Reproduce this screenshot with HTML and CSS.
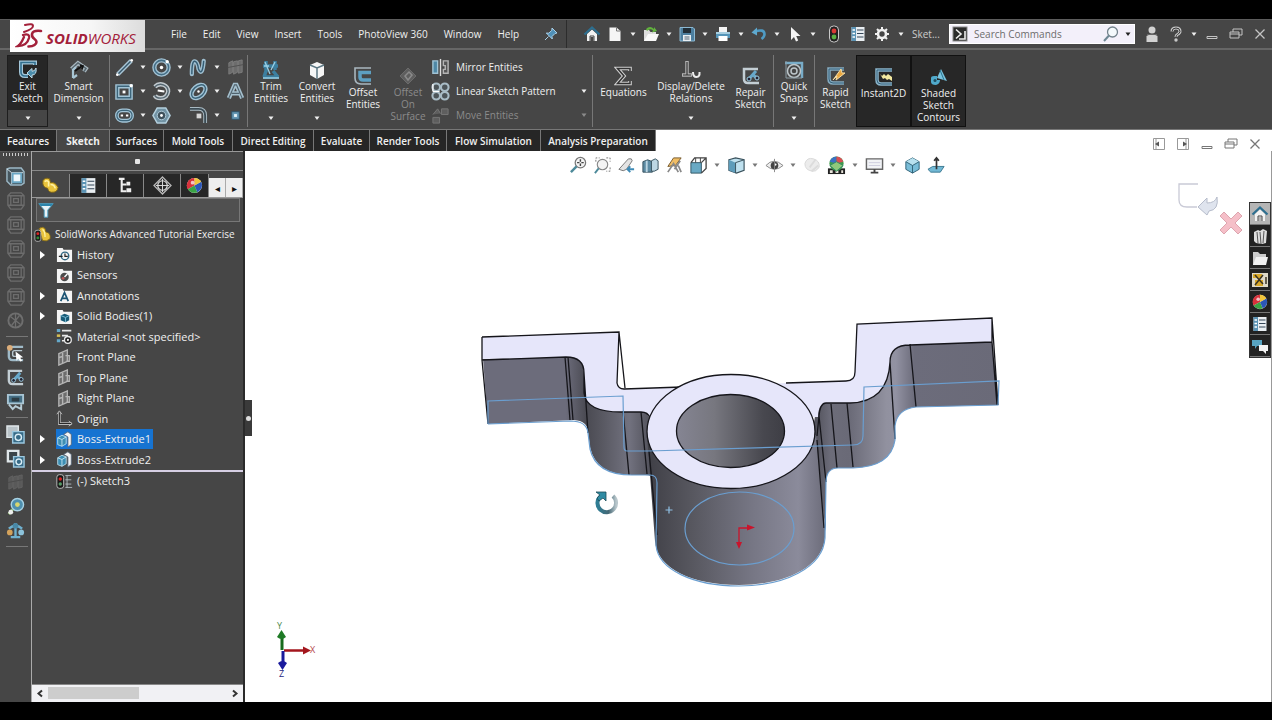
FILE: index.html
```html
<!DOCTYPE html>
<html lang="en">
<head>
<meta charset="utf-8">
<title>SolidWorks</title>
<link rel="stylesheet" href="styles.css">
</head>
<body>
<svg class="defs" aria-hidden="true">
  <defs>
    <linearGradient id="gBore" x1="0" x2="1"><stop offset="0" stop-color="#858593"/><stop offset=".35" stop-color="#77777f"/><stop offset=".8" stop-color="#48484f"/><stop offset="1" stop-color="#3e3e45"/></linearGradient>
    <linearGradient id="gCyl" x1="0" x2="1"><stop offset="0" stop-color="#3f3f46"/><stop offset=".25" stop-color="#57575f"/><stop offset=".6" stop-color="#777785"/><stop offset=".85" stop-color="#8b8b9b"/><stop offset="1" stop-color="#6c6c7a"/></linearGradient>
    <linearGradient id="gLeft" x1="0" x2="1"><stop offset="0" stop-color="#6c6c7b"/><stop offset=".48" stop-color="#6c6c7b"/><stop offset=".6" stop-color="#4a4a52"/><stop offset=".68" stop-color="#56565f"/><stop offset=".85" stop-color="#72727f"/><stop offset="1" stop-color="#4b4b54"/></linearGradient>
    <linearGradient id="gRight" x1="0" x2="1"><stop offset="0" stop-color="#4c4c55"/><stop offset=".1" stop-color="#6c6c79"/><stop offset=".2" stop-color="#6a6a77"/><stop offset=".4" stop-color="#91919f"/><stop offset=".45" stop-color="#9292a2"/><stop offset=".55" stop-color="#6c6c7b"/><stop offset="1" stop-color="#6a6a78"/></linearGradient>
    <linearGradient id="gSpin" x1="0" x2="1"><stop offset="0" stop-color="#2f7d94"/><stop offset=".6" stop-color="#456875"/><stop offset="1" stop-color="#b8c6cb"/></linearGradient>
  </defs>
  <symbol id="caret" viewBox="0 0 8 8"><path d="M1.500 2.500h5L4 6z" fill="currentColor"/></symbol>
  <symbol id="pin" viewBox="0 0 16 16"><path d="M9 2l5 5-2 .5-3 3 .3 2.500-6-6 2.600.2 3-3zM5.500 10.500L2 14" fill="#4f90b8" stroke="#a9d0e8"/></symbol>
  <symbol id="home" viewBox="0 0 18 18"><path d="M4 9v7h3.500v-4h3v4H14V9L9 4.500z" fill="#f2f2f2"/><path d="M1.500 9.500L9 2.500l7.500 7" fill="none" stroke="#2d6f90" stroke-width="2.200"/><path d="M7 16v-5h4v5" fill="none" stroke="#444"/></symbol>
  <symbol id="new" viewBox="0 0 18 18"><path d="M3.500 2.500h7L14.500 6v10h-11z" fill="#f5f5f5"/><path d="M10.500 2.500V6h4" fill="none" stroke="#777"/></symbol>
  <symbol id="open" viewBox="0 0 18 18"><path d="M2 5h5l1.500 2H14v9H2z" fill="#ddd"/><path d="M2 16l4-7h11l-3 7z" fill="#f8f8f8"/><path d="M4 4q4-4 8 0V2l3 4-5 1.500 1-2Q8 3 5 6z" fill="#62b33e"/></symbol>
  <symbol id="save" viewBox="0 0 18 18"><path d="M2 2.500h13l1.500 1.500v12H2z" fill="#4d7f9f" stroke="#8bb8d2"/><path d="M5 3h8v5H5z" fill="#222f38"/><path d="M5 10h8v6H5z" fill="#e8eef2"/><path d="M6.500 12h5M6.500 14h5" stroke="#567"/></symbol>
  <symbol id="print" viewBox="0 0 18 18"><path d="M5 2h8v5H5z" fill="#f5f5f5"/><path d="M2 7h14v6H2z" fill="#5695b8"/><path d="M2 7h14v2H2z" fill="#a7cee0"/><path d="M4.500 11h9v5h-9z" fill="#fff"/></symbol>
  <symbol id="undo" viewBox="0 0 18 18"><path d="M5 6.500q9-3 9.500 2.500 0 3-3 5" fill="none" stroke="#4f9bc4" stroke-width="2.600"/><path d="M1.500 7.500L7 2.500v8z" fill="#5fa9cf"/></symbol>
  <symbol id="cursor" viewBox="0 0 18 18"><path d="M5 2v13l3-3 2 4.500 2.200-1L10.200 11h4.300z" fill="#f4f4f4"/></symbol>
  <symbol id="traffic" viewBox="0 0 18 18"><rect x="4.500" y="1" width="9" height="16" rx="4" fill="#222" stroke="#c9c9c9"/><circle cx="9" cy="6" r="2.400" fill="#d93a35"/><circle cx="9" cy="12" r="2.400" fill="#5bb043"/></symbol>
  <symbol id="list" viewBox="0 0 18 18"><path d="M2.500 2h13v14h-13z" fill="#e9eef2"/><path d="M2.500 2H7v14H2.500z" fill="#5b93b4"/><path d="M8 5h6.500M8 8.500h6.500M8 12h6.500" stroke="#345"/><path d="M3.500 5H6M3.500 8.500H6M3.500 12H6" stroke="#fff" stroke-width="1.500"/></symbol>
  <symbol id="gear" viewBox="0 0 18 18"><circle cx="9" cy="9" r="4" fill="none" stroke="#f1f1f1" stroke-width="2.600"/><path d="M9 2v2.500M9 13.500V16M2 9h2.500M13.500 9H16M4 4l2 2M12 12l2 2M4 14l2-2M12 6l2-2" stroke="#f1f1f1" stroke-width="2"/></symbol>
  <symbol id="cmd" viewBox="0 0 16 16"><rect x="1" y="1" width="14" height="14" fill="#2b2b2b" stroke="#8a8a8a"/><path d="M4 3.500L9 8l-5 4.500M7 13h6V5" fill="none" stroke="#eee" stroke-width="1.600"/></symbol>
  <symbol id="search" viewBox="0 0 18 18"><circle cx="10.500" cy="7" r="5" fill="#f4f9fc" stroke="#73828c" stroke-width="1.300"/><path d="M7 10.500L2 16" stroke="#6f8794" stroke-width="2"/></symbol>
  <symbol id="user" viewBox="0 0 18 18"><circle cx="9" cy="5" r="3.500" fill="#d2d2d2"/><path d="M3.500 17v-6q5.500-3.500 11 0v6z" fill="#d2d2d2"/><path d="M4 9.500h10" stroke="#666"/></symbol>
  <symbol id="help" viewBox="0 0 18 18"><path d="M5 6.500Q5 3 9 3t4 3.300q0 2-2.600 3.200Q9 10.200 9 12" fill="none" stroke="#c8c8c8" stroke-width="3"/><path d="M5 6.500Q5 3 9 3t4 3.300q0 2-2.600 3.200Q9 10.200 9 12" fill="none" stroke="#333"/><circle cx="9" cy="15" r="1.700" fill="#c8c8c8"/></symbol>
  <symbol id="min" viewBox="0 0 14 14"><path d="M2 9.500h10v2H2z" fill="none" stroke="currentColor"/></symbol>
  <symbol id="restore" viewBox="0 0 14 14"><path d="M4 5V2h9v6h-3M1 5h9v6H1zM1 7h9" fill="none" stroke="currentColor"/></symbol>
  <symbol id="close" viewBox="0 0 14 14"><path d="M2.500 2.500l9 9M11.500 2.500l-9 9" stroke="currentColor" stroke-width="1.300"/></symbol>
  <symbol id="dockl" viewBox="0 0 14 14"><path d="M1.500 1.500h11v11h-11zM4 1.500v11" fill="none" stroke="#999"/><path d="M3 7l4-2.500v5z" fill="#555"/></symbol>
  <symbol id="dockr" viewBox="0 0 14 14"><path d="M1.500 1.500h11v11h-11zM10 1.500v11" fill="none" stroke="#999"/><path d="M11 7L7 4.500v5z" fill="#555"/></symbol>

  <symbol id="exit" viewBox="0 0 20 20"><path d="M17 5V2.500H3V12q0 4 4 4h3" fill="none" stroke="#a4c7da" stroke-width="4"/><path d="M17 5V2.500H3V12q0 4 4 4h3" fill="none" stroke="#33708f" stroke-width="1.600"/><path d="M9 13l5-4.500v2.800q3 0 4-3.300 1 7-4 7V18z" fill="#4b8cab" stroke="#bdd9e6"/></symbol>
  <symbol id="dim" viewBox="0 0 20 20"><path d="M2.500 9l6.500-6 8 5.500-2 3" fill="none" stroke="#a9b8c0" stroke-width="4"/><path d="M2.500 9l6.500-6 8 5.500-2 3" fill="none" stroke="#56646c" stroke-width="1.500"/><path d="M4 18V10l3-3M4 18l4-3" stroke="#a8c6d5" stroke-width="2.200" fill="none"/><path d="M6 11l7-5M11 5l3 1-1 3" fill="none" stroke="#111" stroke-width="1.800"/></symbol>
  <symbol id="line" viewBox="0 0 20 20"><path d="M3 17L17 3" stroke="#a9c6d6" stroke-width="4.500"/><path d="M3 17L17 3" stroke="#37576a" stroke-width="1.500"/><circle cx="2.500" cy="17.500" r="1.500" fill="#fff"/><circle cx="17.500" cy="2.500" r="1.500" fill="#fff"/></symbol>
  <symbol id="circle" viewBox="0 0 20 20"><circle cx="10" cy="10" r="7.500" fill="none" stroke="#a3c2d3" stroke-width="4.500"/><circle cx="10" cy="10" r="7.500" fill="none" stroke="#436d85" stroke-width="1.600"/><circle cx="10" cy="10" r="1.800" fill="#fff"/><circle cx="16" cy="4" r="1.800" fill="#fff"/></symbol>
  <symbol id="spline" viewBox="0 0 20 20"><path d="M3 17Q3 3 6 3.500t4 8q4 9 5.500-8.500" fill="none" stroke="#9fbfd0" stroke-width="4.500" stroke-linecap="round"/><path d="M3 17Q3 3 6 3.500t4 8q4 9 5.500-8.500" fill="none" stroke="#345c73" stroke-width="1.500"/></symbol>
  <symbol id="rect" viewBox="0 0 20 20"><path d="M2.500 4.500h14v12h-14z" fill="none" stroke="#a3c5d7" stroke-width="4.500"/><path d="M2.500 4.500h14v12h-14z" fill="none" stroke="#3d657a" stroke-width="1.500"/><path d="M8 9h3v3H8z" fill="#fff"/><circle cx="17" cy="4" r="1.800" fill="#fff"/></symbol>
  <symbol id="arc" viewBox="0 0 20 20"><path d="M3 5q4-4 9-2t5 7q-1 7-8 7-5 0-6-3" fill="none" stroke="#c3cbd0" stroke-width="4.500"/><path d="M3 5q4-4 9-2t5 7q-1 7-8 7-5 0-6-3" fill="none" stroke="#53656f" stroke-width="1.500"/><path d="M6 9l7 1" stroke="#fff" stroke-width="2"/></symbol>
  <symbol id="ellipse" viewBox="0 0 20 20"><ellipse cx="10" cy="10" rx="8.500" ry="5.500" transform="rotate(-42 10 10)" fill="none" stroke="#a3c5d7" stroke-width="4.500"/><ellipse cx="10" cy="10" rx="8.500" ry="5.500" transform="rotate(-42 10 10)" fill="none" stroke="#3d657a" stroke-width="1.500"/><circle cx="10" cy="10" r="1.300" fill="#fff"/></symbol>
  <symbol id="slot" viewBox="0 0 20 20"><rect x="2" y="4.500" width="16" height="11" rx="5.500" fill="none" stroke="#a3c5d7" stroke-width="4"/><rect x="2" y="4.500" width="16" height="11" rx="5.500" fill="none" stroke="#3d657a" stroke-width="1.300"/><path d="M6 10h2.500M11.500 10H14" stroke="#fff" stroke-width="2"/></symbol>
  <symbol id="poly" viewBox="0 0 20 20"><path d="M5.500 2h9l4.500 8-4.500 8h-9L1 10z" fill="#7192a3" stroke="#b4d0de" stroke-width="1.600"/><circle cx="10" cy="10" r="4.500" fill="#40525c" stroke="#b4d0de"/><circle cx="10" cy="10" r="1.500" fill="#fff"/></symbol>
  <symbol id="fillet" viewBox="0 0 20 20"><path d="M1 3h9q7 0 7 7v8" fill="none" stroke="#a9bac3" stroke-width="4"/><path d="M1 3h9q7 0 7 7v8" fill="none" stroke="#3b4b54" stroke-width="2"/><path d="M8 8h5v5H8z" fill="#d5d5d5"/></symbol>
  <symbol id="plane" viewBox="0 0 20 20"><path d="M3 5l4-2v12l-4 2zM8 4l4-1v12l-4 2zM13 3l4-1v13l-4 1z" fill="#6c6c6c" stroke="#7c7c7c"/><path d="M2 10l16-3" stroke="#505050"/></symbol>
  <symbol id="textA" viewBox="0 0 20 20"><path d="M3 17L9 3h2l6 14M6 12h8" fill="none" stroke="#a4bfcd" stroke-width="4.500"/><path d="M3 17L9 3h2l6 14M6 12h8" fill="none" stroke="#50636e" stroke-width="1.200"/></symbol>
  <symbol id="point" viewBox="0 0 20 20"><path d="M6 6h8v8H6z" fill="#6698b4" stroke="#2f5268"/><path d="M8.500 8.500h3v3h-3z" fill="#e8f4fa"/></symbol>
  <symbol id="trim" viewBox="0 0 20 20"><path d="M5 1v11M14 1v9M2 6h15M5 11l-2 6M12 11l5 6M2 17h16" stroke="#3c7fa0" stroke-width="3.500" fill="none"/><path d="M4 2l5 12M14 2l-4 8M2 18h16M3 6h5" stroke="#9bd0e5" stroke-width="1.300" fill="none"/></symbol>
  <symbol id="convert" viewBox="0 0 20 20"><path d="M3 5l7-3 7 3v10l-7 4-7-4z" fill="#f6f6f6"/><path d="M3 5l7 3 7-3M10 8v11" fill="none" stroke="#5d7884" stroke-width="1.500"/></symbol>
  <symbol id="offset" viewBox="0 0 20 20"><path d="M18 2H2v10q0 6 6 6h10" fill="none" stroke="#a9b7bf" stroke-width="1.600"/><path d="M18 6.500H7V11q0 3 3 3h8" fill="none" stroke="#5d9fc1" stroke-width="3.500"/></symbol>
  <symbol id="offsurf" viewBox="0 0 20 20"><path d="M2 10l8-8 8 8-8 8z" fill="#5e5e5e" stroke="#6b6b6b"/><path d="M7 10l4-4 3 3-4 5z" fill="none" stroke="#8b8b8b" stroke-width="1.500"/></symbol>
  <symbol id="mirror" viewBox="0 0 20 20"><path d="M2 3h5v13H2z" fill="#4f88a6" stroke="#a1c4d6" stroke-width="1.500"/><path d="M13 3h5v13h-5v-4h2V8h-2z" fill="#555" stroke="#b5b5b5" stroke-width="1.500"/><path d="M10 1v18" stroke="#ddd" stroke-width="1.500"/></symbol>
  <symbol id="pattern" viewBox="0 0 20 20"><g fill="#4d5559" stroke="#a9bcc6" stroke-width="2.200"><circle cx="5.500" cy="5.500" r="4"/><circle cx="14.500" cy="5.500" r="4"/><circle cx="5.500" cy="14.500" r="4"/><circle cx="14.500" cy="14.500" r="4"/></g><path d="M2 10h7M2 2v8" stroke="#fff" stroke-width="1.300"/></symbol>
  <symbol id="move" viewBox="0 0 20 20"><path d="M11 3h7v6h-7zM2 12h7v6H2zM2 9l5-6 3 5" fill="#5e5e5e" stroke="#777"/></symbol>
  <symbol id="sigma" viewBox="0 0 20 20"><path d="M16 5V2.500H3.500L10 10l-6.500 7.500H16V15" fill="none" stroke="#d0d0d0" stroke-width="3.600"/><path d="M16 5V2.500H3.500L10 10l-6.500 7.500H16V15" fill="none" stroke="#333" stroke-width="1.500"/></symbol>
  <symbol id="relations" viewBox="0 0 20 20"><path d="M6 1v14M1 15h10" stroke="#b5b5b5" stroke-width="3.500"/><path d="M6 2v13M2 15h8" stroke="#333" stroke-width="1.200"/><path d="M12 12q0 5 3.500 5t3-5" fill="none" stroke="#eee" stroke-width="2"/></symbol>
  <symbol id="repair" viewBox="0 0 20 20"><path d="M17 3H3v10q0 4 4 4h11" fill="none" stroke="#c3ced4" stroke-width="2.500"/><path d="M7 14l8-9M11 8l6 5" stroke="#67a8ca" stroke-width="3"/><circle cx="8" cy="13" r="2" fill="#223" stroke="#9ccbe0"/><circle cx="16" cy="12" r="2" fill="#223" stroke="#9ccbe0"/></symbol>
  <symbol id="snaps" viewBox="0 0 20 20"><path d="M1 3h17v15" fill="none" stroke="#78acc8" stroke-width="2.500"/><circle cx="10" cy="11" r="6.500" fill="none" stroke="#bdc6ca" stroke-width="1.500"/><circle cx="10" cy="11" r="3" fill="none" stroke="#bdc6ca" stroke-width="1.500"/><path d="M2 1v17h16" fill="none" stroke="#8b9ba3"/></symbol>
  <symbol id="rapid" viewBox="0 0 20 20"><path d="M18 3H3v10q0 4 4 4h11" fill="none" stroke="#85abc0" stroke-width="3.500"/><path d="M18 3H3v10q0 4 4 4h11" fill="none" stroke="#37617a"/><path d="M7 14l8-11 1 4h3l-9 7 1-4z" fill="#e9a640" stroke="#f6dca2"/></symbol>
  <symbol id="instant" viewBox="0 0 20 20"><path d="M18 3H3v10q0 4 4 4h11" fill="none" stroke="#8ab4ca" stroke-width="3.500"/><path d="M18 3H3v10q0 4 4 4h11" fill="none" stroke="#37617a"/><path d="M6 7l2 2 2-2 2 2 2-2 4 3v4l-3-2-2 1-2-2-2 1z" fill="#f3e9a0"/></symbol>
  <symbol id="shaded" viewBox="0 0 20 20"><path d="M12 2l-4 9 10 3z" fill="#79c3de"/><path d="M11 3l4 10" stroke="#2a7692"/><path d="M2 11q0-2 3-2h3v4h3q0 4-4 5-5 0-5-3z" fill="#4fa9cb"/><circle cx="6" cy="13.500" r="1.500" fill="#1f4f63"/></symbol>

  <symbol id="cube" viewBox="0 0 20 20"><path d="M1 2l3-1h12l3 4v12l-3 2H5l-4-4z" fill="#46565e" stroke="#9cb8c6" stroke-width="1.500"/><path d="M1 2l5 4M6 6h12M6 6v12" fill="none" stroke="#d7e3e9"/><path d="M7 7h9v9H7z" fill="#eef7fb" stroke="#69a6c4" stroke-width="2"/></symbol>
  <symbol id="cubeoff" viewBox="0 0 20 20"><path d="M2 5l3-3h11l3 3v10l-3 4H5l-3-4zM5 5h11v10H5zM8 8h5v4H8zM2 5h3M2 15h3M16 5h3M16 15h3" fill="none" stroke="#6c6c6c" stroke-width="1.400"/></symbol>
  <symbol id="wheeloff" viewBox="0 0 20 20"><circle cx="10" cy="10" r="7.500" fill="none" stroke="#6f6f6f" stroke-width="2"/><path d="M5 6l10 8M14 5L6 15M10 3v14" stroke="#6f6f6f" stroke-width="1.300"/></symbol>
  <symbol id="skpick" viewBox="0 0 20 20"><path d="M18 3H6M3 6v7q0 4 4 4h11" fill="none" stroke="#9fbac8" stroke-width="2.500"/><path d="M17 7H9q-2 0-2 2v2q0 2 2 2h4" fill="none" stroke="#b9c8d0" stroke-width="1.500"/><circle cx="4" cy="4" r="3" fill="#dcae7b"/><path d="M10 8l8 6-3 .5 2 3-2 1-2-3-2 2z" fill="#fff"/></symbol>
  <symbol id="skpan" viewBox="0 0 20 20"><path d="M2 3h16v9H2z" fill="#456f85" stroke="#a8c5d4" stroke-width="2"/><path d="M6 6h8v4H6z" fill="#2d3c44"/><path d="M3 13l4 5 3-3 6 3v-5" fill="none" stroke="#b7ccd6" stroke-width="2"/></symbol>
  <symbol id="blocks" viewBox="0 0 20 20"><path d="M1 1h12v12H1z" fill="#b9c3c8" stroke="#dfe6e9" stroke-width="1.500"/><path d="M7 7h12v12H7z" fill="#366a86" stroke="#9bc8df" stroke-width="1.500"/><circle cx="13" cy="13" r="3.300" fill="none" stroke="#d9edf6" stroke-width="1.500"/></symbol>
  <symbol id="blocks2" viewBox="0 0 20 20"><path d="M2 2h11v11H2z" fill="#3b4449" stroke="#dfe6e9" stroke-width="2.500"/><path d="M8 8h11v11H8z" fill="#366a86" stroke="#9bc8df" stroke-width="1.500"/><circle cx="13.500" cy="13.500" r="3" fill="none" stroke="#d9edf6" stroke-width="1.500"/></symbol>
  <symbol id="spring" viewBox="0 0 20 20"><path d="M3 18l4-5" stroke="#8cc26a" stroke-width="3"/><circle cx="12" cy="8" r="6.500" fill="#4e8fae" stroke="#a8d2e4" stroke-width="1.500"/><circle cx="12" cy="8" r="2.500" fill="#d7d66f"/><circle cx="5" cy="16" r="2.500" fill="#eee"/></symbol>
  <symbol id="scale" viewBox="0 0 20 20"><path d="M10 2v14M3 8q7-6 14 0M5 17h10" stroke="#6fb1d0" stroke-width="2.500" fill="none"/><circle cx="4" cy="12" r="3" fill="#d3a25b"/><circle cx="16" cy="12" r="3" fill="#8cc3db"/><circle cx="10" cy="5" r="3" fill="#4988a6"/></symbol>

  <symbol id="part" viewBox="0 0 20 20"><path d="M2 5q2-4 7-2l1 4q5-1 8 5-1 5-5 5-5 1-6-4Q1 12 2 5z" fill="#e9c33c" stroke="#7d6415"/><path d="M4 6q2-2 4 0v5M10 9q4 0 5 4" fill="none" stroke="#fff2a5" stroke-width="1.700"/></symbol>
  <symbol id="tree" viewBox="0 0 20 20"><path d="M6 3v13h5M6 9h5M3 3h6" stroke="#eee" stroke-width="2.200" fill="none"/><path d="M11 6h4v4h-4zM11 13h5v4h-5z" fill="#eee"/></symbol>
  <symbol id="target" viewBox="0 0 20 20"><path d="M10 1l9 9-9 9-9-9z" fill="none" stroke="#b9b9b9" stroke-width="1.300"/><circle cx="10" cy="10" r="5" fill="none" stroke="#ddd" stroke-width="1.300"/><path d="M10 3v14M3 10h14" stroke="#ddd"/></symbol>
  <symbol id="ball" viewBox="0 0 20 20"><circle cx="10" cy="10" r="8" fill="#e8e8e8"/><path d="M10 10V2a8 8 0 0 0-7 12z" fill="#d8323c"/><path d="M10 10l-7 4a8 8 0 0 0 10 3z" fill="#3aa445"/><path d="M10 10l3 7a8 8 0 0 0 4-11z" fill="#2c57b8"/><path d="M10 10l7-4a8 8 0 0 0-7-4z" fill="#f0c53c"/><circle cx="8" cy="7" r="2" fill="#fff" opacity=".7"/></symbol>
  <symbol id="funnel" viewBox="0 0 20 20"><path d="M2 3h16l-6 7v8H8v-8z" fill="#e8f3f8" stroke="#4aa0c4"/><path d="M2 3h16l-2 2.500H4z" fill="#2c85ac"/></symbol>
  <symbol id="tw" viewBox="0 0 8 8"><path d="M2 0l5 4-5 4z" fill="#fff"/></symbol>
  <symbol id="rootpart" viewBox="0 0 20 20"><path d="M6 3q4-3 7 0l1 4q6 1 5 8-4 4-9 2z" fill="#e9c33c" stroke="#7d6415"/><path d="M10 4q3 2 3 9" fill="none" stroke="#fff2a5" stroke-width="1.500"/><rect x="1" y="5" width="7" height="13" rx="2.500" fill="#1b1b1b" stroke="#bbb"/><circle cx="4.500" cy="9" r="1.700" fill="#d22"/><circle cx="4.500" cy="14" r="1.700" fill="#383"/></symbol>
  <symbol id="fhist" viewBox="0 0 18 18"><path d="M1 2h6l1 2h9v13H1z" fill="#f4f4f4"/><circle cx="9.500" cy="10.500" r="4" fill="none" stroke="#2f6682" stroke-width="1.500"/><path d="M9.500 8v3h3M3 11h4" stroke="#222" stroke-width="1.300" fill="none"/></symbol>
  <symbol id="fsens" viewBox="0 0 18 18"><path d="M1 2h6l1 2h9v13H1z" fill="#f4f4f4"/><circle cx="9" cy="10.500" r="4.500" fill="#4b4b4b"/><path d="M9 10.500l3-3" stroke="#fff" stroke-width="1.500"/><circle cx="7.500" cy="12" r="1.500" fill="#b55"/></symbol>
  <symbol id="fann" viewBox="0 0 18 18"><path d="M1 2h6l1 2h9v13H1z" fill="#f4f4f4"/><path d="M5 15l4-9 4 9M6.500 12h5" fill="none" stroke="#1c5473" stroke-width="1.800"/></symbol>
  <symbol id="fbody" viewBox="0 0 18 18"><path d="M1 2h6l1 2h9v13H1z" fill="#f4f4f4"/><path d="M5 8l4-2 5 2v5l-4 2-5-2z" fill="#175a76"/><path d="M5 8l5 2 4-2M10 10v5" stroke="#7cc0d9" fill="none"/></symbol>
  <symbol id="mat" viewBox="0 0 20 20"><path d="M1 3h4M1 15h4" stroke="#65a9ca" stroke-width="3.500"/><path d="M7 3h11M7 9h7M7 15h4" stroke="#e8e8e8" stroke-width="2"/><path d="M1 9h4" stroke="#d5bd53" stroke-width="3"/><circle cx="14" cy="14" r="4" fill="#222" stroke="#e8e8e8" stroke-width="1.500"/><circle cx="14" cy="14" r="1.300" fill="#eee"/></symbol>
  <symbol id="tplane" viewBox="0 0 18 18"><path d="M3 5l9-4v12l-9 4z" fill="#6d6d6d" stroke="#b5b5b5" stroke-width="1.400"/><path d="M7 4v11M10 7h4v6h-3M3 9l4-1" fill="none" stroke="#b5b5b5" stroke-width="1.500"/></symbol>
  <symbol id="origin" viewBox="0 0 20 20"><path d="M4 3v13h14" fill="none" stroke="#b9b9b9" stroke-width="3"/><path d="M4 3v13h14" fill="none" stroke="#2a2a2a" stroke-width="1.200"/><path d="M1 5l3-4 3 4M15 13l4 3-4 3" fill="none" stroke="#ccc"/></symbol>
  <symbol id="boss" viewBox="0 0 20 20"><path d="M9 4l5-3 4 3v12l-4 3V7z" fill="#f3f3f3" stroke="#567"/><path d="M2 8l5-3 5 2v8l-5 3-5-2z" fill="#3d8eb2" stroke="#bfe4f3"/><path d="M2 8l5 2 5-3M7 10v8" fill="none" stroke="#cdeaf5"/></symbol>
  <symbol id="sk" viewBox="0 0 20 20"><rect x="1" y="2" width="8" height="16" rx="3" fill="#181818" stroke="#ccc"/><circle cx="5" cy="7" r="2" fill="#d22"/><circle cx="5" cy="13" r="2" fill="#596"/><path d="M11 3h7M11 8h7M11 13h7M11 17h8M13 3v14" stroke="#b7c2c8"/></symbol>

  <symbol id="zoomfit" viewBox="0 0 20 20"><circle cx="12" cy="7" r="5.500" fill="#f4f4f4" stroke="#777" stroke-width="1.300"/><path d="M8 11l-6 6" stroke="#4d8a9a" stroke-width="2.500"/><path d="M12 3.500v7M8.500 7h7" stroke="#444" stroke-width="1.500" stroke-dasharray="2.500 2"/></symbol>
  <symbol id="zoomarea" viewBox="0 0 20 20"><circle cx="10" cy="9" r="5.500" fill="#f4f4f4" stroke="#888" stroke-width="1.200"/><path d="M6 13l-4 5" stroke="#4d8a9a" stroke-width="2"/><path d="M3 6V2h4M14 2h4v4M18 12v4h-4" fill="none" stroke="#777" stroke-dasharray="2 1.500"/></symbol>
  <symbol id="prev" viewBox="0 0 20 20"><path d="M2 14L12 3q4-1 4 2l-6 9q-3 3-8 0z" fill="#e4e4e4" stroke="#777"/><path d="M18 14h-6M14 11l-3 3 3 3" fill="none" stroke="#3e8ab5" stroke-width="2"/></symbol>
  <symbol id="section" viewBox="0 0 20 20"><path d="M2 6l5-2 5 2v11H2z" fill="#5d8ca4" stroke="#37515e"/><path d="M11 5l4-2 3 2v9l-4 2h-3z" fill="#bcd6e3" stroke="#37515e"/><path d="M6 5v12" stroke="#bcd6e3" stroke-width="2"/></symbol>
  <symbol id="dynann" viewBox="0 0 20 20"><path d="M3 11L9 2h8l-6 8z" fill="#f0bd65" stroke="#76592b"/><path d="M3 17l6-9 5 9M10 14l6-9M17 17l-3-7" fill="none" stroke="#888" stroke-width="1.800"/></symbol>
  <symbol id="orient" viewBox="0 0 20 20"><path d="M2 7h11v11H2z" fill="#69a9c4" stroke="#315666"/><path d="M2 7l4-5h12v11l-5 5M13 7l5-5" fill="none" stroke="#444" stroke-width="1.400"/><path d="M7 2v5M12 2v5" stroke="#444"/></symbol>
  <symbol id="display" viewBox="0 0 20 20"><path d="M2 4l7-2 9 2v11l-8 3-8-3z" fill="#bfe1ef" stroke="#39515c" stroke-width="1.200"/><path d="M2 4l7 3v11l-7-3z" fill="#5d9cba"/><path d="M9 7l9-3M9 7v11" stroke="#39515c"/></symbol>
  <symbol id="eye" viewBox="0 0 20 20"><path d="M1 10q8-9 18 0-9 8-18 0z" fill="#eee" stroke="#888"/><circle cx="10" cy="10" r="4" fill="#444"/><circle cx="11" cy="9" r="1.200" fill="#fff"/><path d="M10 3v14" stroke="#888"/></symbol>
  <symbol id="ghost" viewBox="0 0 20 20"><path d="M2 8q2-7 9-5t6 9q-4 5-7 4-8-1-8-8z" fill="#ececec" stroke="#d8d8d8"/><path d="M7 12l6-8M9 16l7-6" stroke="#dcdcdc" stroke-width="2"/></symbol>
  <symbol id="scene" viewBox="0 0 20 20"><path d="M1 13h18v6H1z" fill="#222"/><path d="M3 15h3v3H3zM9 15h3v3H9zM15 15h2v3h-2z" fill="#e8e4da"/><circle cx="10" cy="8" r="7.500" fill="#3f9b4b"/><path d="M10 8V.5A7.500 7.500 0 0 0 3 6z" fill="#3c70c4"/><path d="M10 8V.5A7.500 7.500 0 0 1 17 6z" fill="#d94e55"/><path d="M3 10l7-4 7 4-7 6z" fill="#8fc97b" stroke="#386"/></symbol>
  <symbol id="monitor" viewBox="0 0 20 20"><path d="M1.500 3h17v11h-17z" fill="#f1f3f6" stroke="#666" stroke-width="1.500"/><path d="M4 7h12M4 10h12" stroke="#ccd"/><path d="M10 14v3M6 17.500h8" stroke="#444" stroke-width="2"/></symbol>
  <symbol id="iso" viewBox="0 0 20 20"><path d="M3 6l7-4 7 4v8l-7 4-7-4z" fill="#79bdd8" stroke="#2f6176"/><path d="M3 6l7 4 7-4-7-4z" fill="#b8e1ef"/><path d="M3 6l7 4 7-4M10 10v8" fill="none" stroke="#2f6176"/></symbol>
  <symbol id="normal" viewBox="0 0 20 20"><path d="M1 14l5-3h12l-4 6H4z" fill="#72b9d5" stroke="#3b7890"/><path d="M10 14V3M7.500 5L10 2l2.500 3" fill="none" stroke="#333" stroke-width="1.800"/></symbol>
  <symbol id="books" viewBox="0 0 18 18"><path d="M3 5l4-2 2 1 3-2 4 2-1 12-4 1-6-1-2-2z" fill="#ddd"/><path d="M6 5l1 11M9 5l1 12M13 4l-1 12" stroke="#555"/></symbol>
  <symbol id="folder" viewBox="0 0 18 18"><path d="M2 3h5l2 2h6v11H2z" fill="#ccc"/><path d="M2 16l3-8h12l-2 8z" fill="#f1f1f1"/></symbol>
  <symbol id="palette" viewBox="0 0 18 18"><path d="M1 2h16v14H1z" fill="#ded9c8"/><path d="M2 3h9v4H2zM4 9h8v6H4z" fill="#d9a829"/><path d="M4 4l8 9M12 4l-8 10M15 6v7" stroke="#3a3323" stroke-width="1.500"/></symbol>
  <symbol id="chat" viewBox="0 0 18 18"><path d="M1 3h10v6H6l-2 3V9H1z" fill="#57a3c1"/><path d="M8 8h9v6h-2v3l-3-3H8z" fill="#f3f3f3"/></symbol>
</svg>

<div class="app">
  <header class="titlebar">
    <div class="logo">
      <svg class="ds" viewBox="0 0 28 26"><g fill="none" stroke="#a3203a" stroke-linecap="round"><path d="M10 2q8-2 8 1 0 3-9 6" stroke-width="2"/><path d="M8 12q7-2 6 3-2 8-11 8 3-2 6-9" stroke-width="2.300"/><path d="M26 8q-8-1-9 3-.5 3 2.500 5 4 3 0 6-2 1.500-6 1.500" stroke-width="2.600"/></g></svg>
      <span class="brand"><b>SOLID</b>WORKS</span>
    </div>
    <nav class="menu">
      <button>File</button><button>Edit</button><button>View</button><button>Insert</button><button>Tools</button><button>PhotoView 360</button><button>Window</button><button>Help</button>
    </nav>
    <button class="pin" aria-label="Pin menu"><svg><use href="#pin"/></svg></button>
    <div class="qat">
      <button class="w28" aria-label="Home"><svg><use href="#home"/></svg></button>
      <button class="w18" aria-label="New"><svg><use href="#new"/></svg></button><button class="w18 c" aria-label="New options"><svg><use href="#caret"/></svg></button>
      <button class="w18" aria-label="Open"><svg><use href="#open"/></svg></button><button class="w18 c" aria-label="Open options"><svg><use href="#caret"/></svg></button>
      <button class="w18" aria-label="Save"><svg><use href="#save"/></svg></button><button class="w18 c" aria-label="Save options"><svg><use href="#caret"/></svg></button>
      <button class="w18" aria-label="Print"><svg><use href="#print"/></svg></button><button class="w18 c" aria-label="Print options"><svg><use href="#caret"/></svg></button>
      <button class="w18" aria-label="Undo"><svg><use href="#undo"/></svg></button><button class="w18 c" aria-label="Undo options"><svg><use href="#caret"/></svg></button>
      <button class="w18" aria-label="Select"><svg><use href="#cursor"/></svg></button><button class="w18 c" aria-label="Select options"><svg><use href="#caret"/></svg></button>
      <button class="w24" aria-label="Rebuild"><svg><use href="#traffic"/></svg></button>
      <button class="w24" aria-label="File properties"><svg><use href="#list"/></svg></button>
      <button class="w24" aria-label="Options"><svg><use href="#gear"/></svg></button>
      <button class="w14 c" aria-label="Options menu"><svg><use href="#caret"/></svg></button>
    </div>
    <span class="doc">Sket...</span>
    <label class="search"><svg><use href="#cmd"/></svg><input type="text" placeholder="Search Commands" aria-label="Search Commands"><svg class="mag"><use href="#search"/></svg><svg class="sc"><use href="#caret"/></svg></label>
    <div class="sys">
      <button aria-label="Log in"><svg><use href="#user"/></svg></button>
      <button aria-label="Help"><svg><use href="#help"/></svg></button>
      <button class="c" aria-label="Help menu"><svg><use href="#caret"/></svg></button>
      <button class="win" aria-label="Minimize"><svg><use href="#min"/></svg></button>
      <button class="win" aria-label="Restore"><svg><use href="#restore"/></svg></button>
      <button class="win" aria-label="Close"><svg><use href="#close"/></svg></button>
    </div>
  </header>

  <section class="ribbon">
    <button class="big exit"><svg class="ic"><use href="#exit"/></svg><span>Exit<br>Sketch</span><svg class="dd"><use href="#caret"/></svg></button>
    <button class="big w60"><svg class="ic"><use href="#dim"/></svg><span>Smart<br>Dimension</span><svg class="dd"><use href="#caret"/></svg></button>
    <div class="sketchgrid">
      <button aria-label="Line"><svg><use href="#line"/></svg></button><svg class="cc"><use href="#caret"/></svg><button aria-label="Circle"><svg><use href="#circle"/></svg></button><svg class="cc"><use href="#caret"/></svg><button aria-label="Spline"><svg><use href="#spline"/></svg></button><svg class="cc"><use href="#caret"/></svg><button aria-label="Plane"><svg><use href="#plane"/></svg></button>
      <button aria-label="Rectangle"><svg><use href="#rect"/></svg></button><svg class="cc"><use href="#caret"/></svg><button aria-label="Arc"><svg><use href="#arc"/></svg></button><svg class="cc"><use href="#caret"/></svg><button aria-label="Ellipse"><svg><use href="#ellipse"/></svg></button><svg class="cc"><use href="#caret"/></svg><button aria-label="Text"><svg><use href="#textA"/></svg></button>
      <button aria-label="Slot"><svg><use href="#slot"/></svg></button><svg class="cc"><use href="#caret"/></svg><button aria-label="Polygon"><svg><use href="#poly"/></svg></button><i></i><button aria-label="Fillet"><svg><use href="#fillet"/></svg></button><svg class="cc"><use href="#caret"/></svg><button aria-label="Point"><svg><use href="#point"/></svg></button>
    </div>
    <button class="big w46"><svg class="ic"><use href="#trim"/></svg><span>Trim<br>Entities</span><svg class="dd"><use href="#caret"/></svg></button>
    <button class="big w46"><svg class="ic"><use href="#convert"/></svg><span>Convert<br>Entities</span><svg class="dd"><use href="#caret"/></svg></button>
    <button class="big low w46"><svg class="ic"><use href="#offset"/></svg><span>Offset<br>Entities</span></button>
    <button class="big low w44 off" disabled><svg class="ic"><use href="#offsurf"/></svg><span>Offset<br>On<br>Surface</span></button>
    <div class="stack">
      <button><svg><use href="#mirror"/></svg><span>Mirror Entities</span></button>
      <button><svg><use href="#pattern"/></svg><span>Linear Sketch Pattern</span><svg class="cc"><use href="#caret"/></svg></button>
      <button class="off" disabled><svg><use href="#move"/></svg><span>Move Entities</span><svg class="cc"><use href="#caret"/></svg></button>
    </div>
    <button class="big low w60"><svg class="ic"><use href="#sigma"/></svg><span>Equations</span></button>
    <button class="big w74"><svg class="ic"><use href="#relations"/></svg><span>Display/Delete<br>Relations</span><svg class="dd"><use href="#caret"/></svg></button>
    <button class="big low w46 sep"><svg class="ic"><use href="#repair"/></svg><span>Repair<br>Sketch</span></button>
    <button class="big w41 sep"><svg class="ic"><use href="#snaps"/></svg><span>Quick<br>Snaps</span><svg class="dd"><use href="#caret"/></svg></button>
    <button class="big low w41"><svg class="ic"><use href="#rapid"/></svg><span>Rapid<br>Sketch</span></button>
    <button class="big low on"><svg class="ic"><use href="#instant"/></svg><span>Instant2D</span></button>
    <button class="big low on"><svg class="ic"><use href="#shaded"/></svg><span>Shaded<br>Sketch<br>Contours</span></button>
  </section>

  <div class="tabrow">
    <nav class="tabs">
      <button>Features</button><button class="sel">Sketch</button><button>Surfaces</button><button>Mold Tools</button><button>Direct Editing</button><button>Evaluate</button><button>Render Tools</button><button>Flow Simulation</button><button>Analysis Preparation</button>
    </nav>
    <div class="docwin">
      <button aria-label="Dock left"><svg><use href="#dockl"/></svg></button><button aria-label="Dock right"><svg><use href="#dockr"/></svg></button><button aria-label="Minimize document"><svg><use href="#min"/></svg></button><button aria-label="Restore document"><svg><use href="#restore"/></svg></button><button aria-label="Close document"><svg><use href="#close"/></svg></button>
    </div>
  </div>

  <main class="main">
    <aside class="tools">
      <i class="grip"></i>
      <button aria-label="View"><svg><use href="#cube"/></svg></button>
      <button aria-label="Front" disabled><svg><use href="#cubeoff"/></svg></button>
      <button aria-label="Back" disabled><svg><use href="#cubeoff"/></svg></button>
      <button aria-label="Left" disabled><svg><use href="#cubeoff"/></svg></button>
      <button aria-label="Right" disabled><svg><use href="#cubeoff"/></svg></button>
      <button aria-label="Top" disabled><svg><use href="#cubeoff"/></svg></button>
      <button aria-label="Wheel" disabled><svg><use href="#wheeloff"/></svg></button>
      <hr>
      <button aria-label="Edit sketch"><svg><use href="#skpick"/></svg></button>
      <button aria-label="Repair"><svg><use href="#repair"/></svg></button>
      <button aria-label="Picture"><svg><use href="#skpan"/></svg></button>
      <hr>
      <button aria-label="Make block"><svg><use href="#blocks"/></svg></button>
      <button aria-label="Edit block"><svg><use href="#blocks2"/></svg></button>
      <button aria-label="Insert block" disabled><svg class="dim"><use href="#plane"/></svg></button>
      <button aria-label="Belt"><svg><use href="#spring"/></svg></button>
      <button aria-label="Balance"><svg><use href="#scale"/></svg></button>
      <hr>
    </aside>

    <aside class="panel">
      <div class="handle"><i></i></div>
      <div class="ptabs">
        <button class="sel" aria-label="Feature tree"><svg><use href="#part"/></svg></button>
        <button aria-label="Properties"><svg><use href="#list"/></svg></button>
        <button aria-label="Configurations"><svg><use href="#tree"/></svg></button>
        <button aria-label="Dimensions"><svg><use href="#target"/></svg></button>
        <button aria-label="Display"><svg><use href="#ball"/></svg></button>
        <div class="pscroll"><button aria-label="Previous tabs">◂</button><button aria-label="Next tabs">▸</button></div>
      </div>
      <label class="filter"><svg><use href="#funnel"/></svg><input type="text" aria-label="Filter tree"></label>
      <ul class="ftree">
        <li class="root"><svg><use href="#rootpart"/></svg><span>SolidWorks Advanced Tutorial Exercise</span></li>
        <li><svg class="tw"><use href="#tw"/></svg><svg><use href="#fhist"/></svg><span>History</span></li>
        <li><i class="tw"></i><svg><use href="#fsens"/></svg><span>Sensors</span></li>
        <li><svg class="tw"><use href="#tw"/></svg><svg><use href="#fann"/></svg><span>Annotations</span></li>
        <li><svg class="tw"><use href="#tw"/></svg><svg><use href="#fbody"/></svg><span>Solid Bodies(1)</span></li>
        <li><i class="tw"></i><svg><use href="#mat"/></svg><span>Material &lt;not specified&gt;</span></li>
        <li><i class="tw"></i><svg><use href="#tplane"/></svg><span>Front Plane</span></li>
        <li><i class="tw"></i><svg><use href="#tplane"/></svg><span>Top Plane</span></li>
        <li><i class="tw"></i><svg><use href="#tplane"/></svg><span>Right Plane</span></li>
        <li><i class="tw"></i><svg><use href="#origin"/></svg><span>Origin</span></li>
        <li><svg class="tw"><use href="#tw"/></svg><div class="hot"><svg><use href="#boss"/></svg><span>Boss-Extrude1</span></div></li>
        <li><svg class="tw"><use href="#tw"/></svg><svg><use href="#boss"/></svg><span>Boss-Extrude2</span></li>
        <li class="rollback"><i class="tw"></i><svg><use href="#sk"/></svg><span>(-) Sketch3</span></li>
      </ul>
      <div class="hscroll"><button aria-label="Scroll left"><svg viewBox="0 0 8 8"><path d="M6 1L2.500 4 6 7"/></svg></button><div class="track"><i></i></div><button aria-label="Scroll right"><svg viewBox="0 0 8 8"><path d="M2 1l3.500 3L2 7"/></svg></button></div>
    </aside>

    <section class="view">
      <svg class="scene" viewBox="245 151 1026 551" role="img" aria-label="Bracket model">
        <!-- side walls -->
        <path d="M483 359l83-2q19 0 18 16l1 20q3 19 38 19h18q9 0 9 10l5 58q-3-5-10-5h-13q-36 0-42-28l-2-16q-1-10-14-11l-86 4z" fill="url(#gLeft)"/>
        <path d="M992 342l-82 3q-20 0-20 17-2 40-40 41h-24q-8 1-10 7l-4 25 14 96v-50q1-13 12-13h15q38-1 42-28v-14q2-17 21-19l82-2z" fill="url(#gRight)"/>
        <path d="M647 435l8 106c2 28 38 44 84 44s84-18 86-48v-11l-9-91z" fill="url(#gCyl)"/>
        <!-- top face -->
        <path d="M482 337l137-5-2 51q1 6 7 6l58-2 104-4 58-2q11 0 11-9l2-48 135-6v24l-82 3q-20 0-20 17-2 40-40 41h-24q-8 1-8 14L650 420q-2-8-9-8h-20q-35 0-37-19v-20q0-16-18-16l-84 2z" fill="#e6e6fa"/>
        <g fill="none" stroke="#15151a" stroke-width="1.300">
          <path d="M482 337l137-5-2 51q1 6 7 6l58-2M786 383l60-2q9 0 9-9l2-48 135-6v24l-82 3q-20 0-20 17-2 40-40 41h-24q-6 0-7 13l-2 20M482 337v23l84-3q18 0 18 16v20q2 19 37 19h20q7 0 9 6M482 360l6 64M565 357l5 63M568 357l5 63M584 373l4 60M623 411l6 64M641 412l6 62M619 332l6 56M992 318l6 87M992 342l5 63M910 344l6 63M890 362l5 77M831 404l6 64M847 403l6 64M819 416l7 66M817 440l7 88M649 451l8 84"/>
          <ellipse cx="731" cy="431.500" rx="84" ry="57" fill="#e6e6fa"/>
          <ellipse cx="730.500" cy="431" rx="54" ry="36.500" fill="url(#gBore)"/>
        </g>
        <g fill="none" stroke="#6a9ed0" stroke-width="1.200">
          <path d="M488 424l82-3q17 0 18 12l2 16q6 26 42 26h18q7 0 7 8l-1 62c2 25 38 41 83 41s84-18 86-48l1-57q1-13 12-13h15q38-1 42-28v-14q2-17 21-19l82-2 1-24-135 6-1 49q0 9-10 9l-204 6h-22q-3 0-3-4l-1-51-135 5v23"/>
          <ellipse cx="739.500" cy="528.500" rx="54.500" ry="36.500"/>
          <path d="M669 506.500v7M665.500 510h7" stroke="#8fc0e4"/>
        </g>
        <g stroke="#c9142c" fill="#c9142c"><path d="M739 544v-16h10" fill="none" stroke-width="1.300"/><path d="M755 527.500l-8-3v6zM739 549l-3-7h6z" stroke="none"/></g>
        <!-- rotate cursor -->
        <path d="M600 496.500a9.300 9.300 0 1 0 13-.500" fill="none" stroke="url(#gSpin)" stroke-width="4"/><path d="M596 492h10v9l-3-3-4 3-2-3 3-3z" fill="#2f8ba3" stroke="#1c4c59" stroke-width=".8"/>
        <!-- confirmation corner -->
        <path d="M1198 184h-19v16q0 7 8 7h10" fill="none" stroke="#c9cad6" stroke-width="1.300"/><path d="M1198 207l9-9v5q8 0 10-6 2 13-8 14l-2 4z" fill="#dfe4ee" stroke="#b6bccb"/>
        <path d="M1224 212l7 7 7-7 4 4-7 7 7 7-4 4-7-7-7 7-4-4 7-7-7-7z" fill="#f5bfc8" stroke="#dda5af"/>
        <!-- triad -->
        <path d="M282 650v-14" stroke="#176b1d" stroke-width="3"/><path d="M281.500 630l4.500 7q-4.500 4-9 0z" fill="#1e7a25"/>
        <path d="M284 650.500h20" stroke="#a3161d" stroke-width="2.500"/><path d="M311 650.500l-8-4v8z" fill="#a3161d"/>
        <path d="M283 651v12" stroke="#1a1a9c" stroke-width="3"/><path d="M278 663q4.500-4 9 0l-4.500 7z" fill="#1a1a9c"/>
        <g class="axis"><text x="277" y="629" fill="#4d8a4f">Y</text><text x="310" y="653" fill="#b4474c">X</text><text x="279" y="677" fill="#26267e">Z</text></g>
      </svg>
      <div class="hud">
        <button aria-label="Zoom to fit"><svg><use href="#zoomfit"/></svg></button>
        <button aria-label="Zoom to area"><svg><use href="#zoomarea"/></svg></button>
        <button aria-label="Previous view"><svg><use href="#prev"/></svg></button>
        <button aria-label="Section view"><svg><use href="#section"/></svg></button>
        <button aria-label="Dynamic annotation"><svg><use href="#dynann"/></svg></button>
        <button aria-label="View orientation"><svg><use href="#orient"/></svg></button><svg class="cc"><use href="#caret"/></svg>
        <button aria-label="Display style"><svg><use href="#display"/></svg></button><svg class="cc"><use href="#caret"/></svg>
        <button aria-label="Hide/show"><svg><use href="#eye"/></svg></button><svg class="cc"><use href="#caret"/></svg>
        <button aria-label="Edit appearance" disabled><svg><use href="#ghost"/></svg></button>
        <button aria-label="Apply scene"><svg><use href="#scene"/></svg></button><svg class="cc"><use href="#caret"/></svg>
        <button aria-label="View settings"><svg><use href="#monitor"/></svg></button><svg class="cc"><use href="#caret"/></svg>
        <button aria-label="Isometric"><svg><use href="#iso"/></svg></button>
        <button aria-label="Normal to"><svg><use href="#normal"/></svg></button>
      </div>
      <button class="splitter" aria-label="Collapse panel"><i></i></button>
      <nav class="taskpane">
        <button class="sel" aria-label="Resources"><svg><use href="#home"/></svg></button>
        <button aria-label="Design library"><svg><use href="#books"/></svg></button>
        <button aria-label="File explorer"><svg><use href="#folder"/></svg></button>
        <button aria-label="View palette"><svg><use href="#palette"/></svg></button>
        <button aria-label="Appearances"><svg><use href="#ball"/></svg></button>
        <button aria-label="Custom properties"><svg><use href="#list"/></svg></button>
        <button aria-label="Forum"><svg><use href="#chat"/></svg></button>
      </nav>
    </section>
  </main>
</div>
</body>
</html>
```
FILE: styles.css
```css
* { box-sizing: border-box; }
body {
  margin: 0;
  background: #000;
  color: #f0f0f0;
  font-family: "Open Sans", "Noto Sans", sans-serif;
  font-size: 10px;
  line-height: 12px;
}
button {
  display: flex;
  align-items: center;
  justify-content: center;
  margin: 0;
  padding: 0;
  border: 0;
  background: none;
  color: inherit;
  font: inherit;
}
svg { display: block; flex: none; }
.defs { position: absolute; width: 0; height: 0; }
.app {
  display: flex;
  flex-direction: column;
  min-height: 100vh;
  padding: 19px 0 18px;
}

/* title bar */
.titlebar {
  display: flex;
  align-items: center;
  height: 31px;
  background: #464646;
  border-top: 1px solid #5c5c5c;
  border-bottom: 2px solid #666;
}
.logo {
  display: flex;
  align-items: center;
  align-self: flex-start;
  gap: 3px;
  width: 135px;
  height: 32px;
  margin-left: 10px;
  padding-left: 5px;
  background: linear-gradient(90deg, #fff, #f6f6f6 60%, #dcdcdc);
  color: #a3203a;
  z-index: 1;
}
.ds { width: 28px; height: 26px; }
.brand { font-size: 15px; line-height: 16px; font-style: italic; padding-top: 4px; }
.menu { display: flex; gap: 16px; width: 377px; padding-left: 26px; }
.pin { width: 45px; height: 28px; border-right: 1px solid #2c2c2c; padding-left: 14px; }
.pin svg { width: 16px; height: 16px; }
.qat { display: flex; flex: 1; padding-left: 11px; }
.qat button { height: 28px; }
.qat svg { width: 18px; height: 18px; }
.qat .c svg, .sys .c svg { width: 8px; height: 8px; }
.w28 { width: 28px; } .w24 { width: 24px; } .w18 { width: 18px; } .w14 { width: 14px; }
.doc { width: 37px; color: #ccc; }
.search {
  display: flex;
  align-items: center;
  width: 186px;
  height: 20px;
  padding: 0 2px;
  background: #f3f0fa;
  border: 1px solid #fff;
  color: #333;
}
.search svg { width: 16px; height: 16px; }
.search .mag { width: 18px; height: 18px; }
.search .sc { width: 8px; height: 8px; margin-left: 4px; color: #222; }
.search input {
  flex: 1;
  min-width: 0;
  border: 0;
  padding: 0 6px;
  background: none;
  font: inherit;
  outline: 0;
}
.search input::placeholder { color: #6c6c6c; opacity: 1; }
.sys { display: flex; padding-left: 5px; }
.sys button { width: 24px; height: 28px; }
.sys svg { width: 18px; height: 18px; }
.sys .c { width: 12px; }
.sys .win svg { width: 14px; height: 14px; color: #c4c4c4; }

/* ribbon */
.ribbon {
  display: flex;
  align-items: stretch;
  height: 80px;
  padding: 5px 0 2px 7px;
  background: #464646;
  border-bottom: 1px solid #777;
}
.big {
  flex-direction: column;
  justify-content: flex-start;
  padding-top: 5px;
  line-height: 12px;
}
.big .ic { width: 20px; height: 20px; }
.big .dd { width: 8px; height: 8px; margin: auto 0 5px; }
.big.low { padding-top: 11px; }
.off { color: #8b8b8b; }
.cc { width: 8px; height: 8px; }
.exit { width: 41px; border: 1px solid #1e1e1e; background: linear-gradient(#262626 54px, #464646 54px); padding-top: 4px; }
.exit .dd { margin-bottom: 4px; }
.w60 { width: 61px; } .w46 { width: 46px; } .w74 { width: 74px; } .w44 { width: 44px; } .w41 { width: 41px; }
.sep { border-right: 1px solid #777; }
.sketchgrid {
  display: grid;
  grid-template-columns: 20px 17px 20px 17px 20px 17px 20px;
  grid-template-rows: repeat(3, 24px);
  align-items: center;
  justify-items: center;
  width: 139px;
  padding-left: 4px;
  border-left: 1px solid #777;
  border-right: 1px solid #777;
}
.sketchgrid button svg { width: 19px; height: 19px; }
.stack { display: flex; flex-direction: column; width: 163px; padding-left: 1px; border-right: 1px solid #777; }
.stack button { justify-content: flex-start; gap: 6px; height: 24px; }
.stack button svg { width: 19px; height: 19px; }
.stack button .cc { width: 8px; height: 8px; margin: 0 4px 0 auto; }
.on { width: 55px; background: #272727; border: 1px solid #111; }

/* command tabs */
.tabrow { display: flex; height: 21px; background: #fff; }
.tabs {
  display: grid;
  grid-template-columns: 57px 53px 54px 69px 81px 56px 77px 94px 115px;
}
.tabs button { background: #262626; border-right: 1px solid #777; font-weight: 600; }
.tabs .sel { background: #464646; font-weight: 700; }
.docwin { display: flex; align-items: center; margin-left: auto; padding: 6px 5px 0 0; color: #777; }
.docwin button { width: 24px; height: 14px; }
.docwin svg { width: 14px; height: 14px; }

/* work area */
.main { display: flex; flex: 1; }
.tools { width: 31px; background: #464646; border-top: 1px solid #555; }
.tools button { width: 31px; height: 24px; }
.tools svg { width: 19px; height: 19px; }
.tools .dim { opacity: .5; }
.tools hr { height: 1px; margin: 4px 3px 4px 6px; border: 0; background: #777; }
.grip { display: block; height: 3px; margin: 1px 2px 8px 3px; background: repeating-linear-gradient(90deg, #ccc 0 1px, #464646 1px 3px); }

.panel {
  display: flex;
  flex-direction: column;
  width: 214px;
  background: #464646;
  border-left: 1px solid #aaa;
  border-right: 2px solid #2a2a2a;
}
.handle { display: flex; justify-content: center; align-items: center; height: 20px; border-top: 1px solid #999; border-bottom: 1px solid #888; }
.handle i { width: 5px; height: 5px; background: #e6e6e6; border-radius: 1px; }
.ptabs { display: grid; grid-template-columns: 38px 37px 37px 37px 1fr 34px; height: 27px; padding-top: 3px; border-bottom: 1px solid #999; }
.ptabs > button { background: #272727; border-right: 1px solid #888; }
.ptabs > .sel { background: #464646; }
.ptabs svg { width: 19px; height: 19px; }
.pscroll { display: flex; margin-top: 4px; }
.pscroll button { flex: 1; background: #eee; color: #111; border-right: 1px solid #aaa; }
.filter { display: flex; align-items: center; height: 24px; margin: 0 3px 0 4px; background: #505050; border: 1px solid #777; }
.filter svg { width: 18px; height: 18px; }
.filter input { flex: 1; min-width: 0; border: 0; background: none; color: #fff; }
.ftree { flex: 1; margin: 0; padding: 2px 0 0; list-style: none; overflow: hidden; font-size: 11px; }
.ftree li { display: flex; align-items: center; gap: 4px; height: 21px; padding-left: 6px; white-space: nowrap; }
.ftree li:nth-child(odd) { height: 20px; }
.ftree svg { width: 17px; height: 17px; }
.ftree .tw { width: 8px; height: 8px; margin-right: 6px; }
.ftree .root { padding-left: 2px; font-size: 10px; }
.hot { display: flex; align-items: center; gap: 4px; height: 20px; padding-right: 2px; background: #1673d1; }
.ftree .rollback { border-top: 2px solid #d6cfe4; }
.hscroll { display: flex; height: 18px; background: #f1f1f4; border-top: 1px solid #888; }
.hscroll button { width: 16px; }
.hscroll svg { width: 8px; height: 9px; fill: none; stroke: #333; stroke-width: 2; }
.track { flex: 1; }
.track i { display: block; width: 51%; height: 12px; margin-top: 2px; background: #cdcdcd; }

.view { position: relative; flex: 1; background: #fff; border-right: 1px solid #999; }
.scene { position: absolute; width: 100%; height: 100%; }
.axis { font-size: 9px; }
.hud { position: relative; display: flex; align-items: center; justify-content: center; height: 28px; padding-right: 2px; color: #777; }
.hud button { width: 24px; height: 24px; }
.hud button svg { width: 19px; height: 19px; }
.hud .cc { width: 8px; margin: 0 3px; }
.splitter { position: absolute; left: 0; top: 249px; width: 7px; height: 36px; background: #3a3a3a; }
.splitter i { width: 5px; height: 5px; border-radius: 50%; background: #ddd; }
.taskpane { position: absolute; right: 0; top: 51px; width: 22px; background: #222; border: 1px solid #333; }
.taskpane button { width: 100%; height: 22px; border-bottom: 1px solid #777; }
.taskpane .sel { background: #b5b5b5; }
.taskpane svg { width: 18px; height: 18px; }
```
